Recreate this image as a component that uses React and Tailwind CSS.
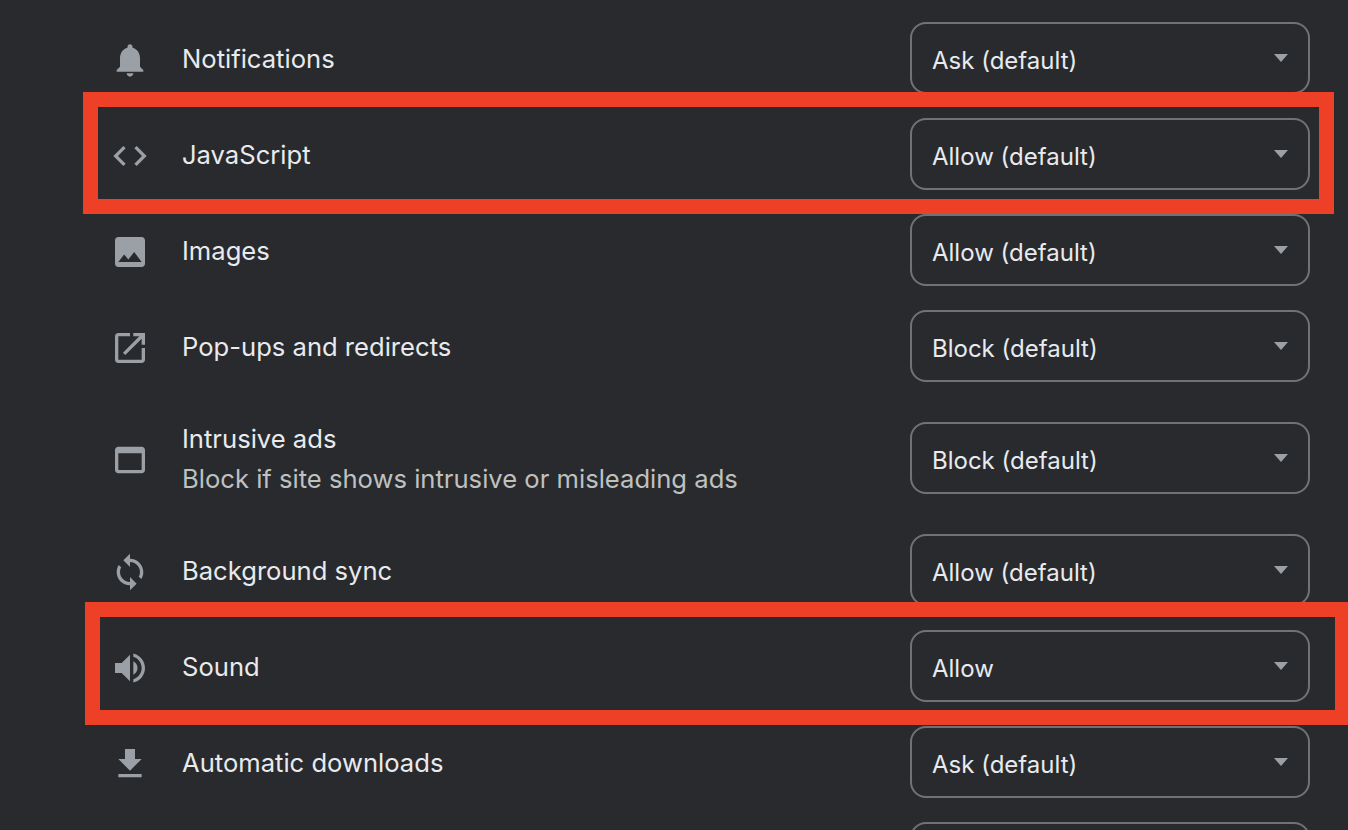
const ICONS = {
  bell: 'M12 22c1.1 0 2-.9 2-2h-4c0 1.1.89 2 2 2zm6-6v-5c0-3.07-1.64-5.64-4.5-6.32V4c0-.83-.67-1.5-1.5-1.5s-1.5.67-1.5 1.5v.68C7.63 5.36 6 7.92 6 11v5l-2 2v1h16v-1l-2-2z',
  code: 'M9.4 16.6L4.8 12l4.6-4.6L8 6l-6 6 6 6 1.4-1.4zm5.2 0l4.6-4.6-4.6-4.6L16 6l6 6-6 6-1.4-1.4z',
  image: 'M21 19V5c0-1.1-.9-2-2-2H5c-1.1 0-2 .9-2 2v14c0 1.1.9 2 2 2h14c1.1 0 2-.9 2-2zM8.5 13.5l2.5 3.01L14.5 12l4.5 6H5l3.5-4.5z',
  popup: 'M19 19H5V5h7V3H5c-1.11 0-2 .9-2 2v14c0 1.1.89 2 2 2h14c1.1 0 2-.9 2-2v-7h-2v7zM14 3v2h3.59l-9.83 9.83 1.41 1.41L19 6.41V10h2V3h-7z',
  ads: 'M19 4H5c-1.11 0-2 .9-2 2v12c0 1.1.89 2 2 2h14c1.1 0 2-.9 2-2V6c0-1.1-.89-2-2-2zm0 14H5V8h14v10z',
  sync: 'M12 4V1L8 5l4 4V6c3.31 0 6 2.69 6 6 0 1.01-.25 1.97-.7 2.8l1.46 1.46C19.54 15.03 20 13.57 20 12c0-4.42-3.58-8-8-8zm0 14c-3.31 0-6-2.69-6-6 0-1.01.25-1.97.7-2.8L5.24 7.74C4.46 8.97 4 10.43 4 12c0 4.42 3.58 8 8 8v3l4-4-4-4v3z',
  sound: 'M3 9v6h4l5 5V4L7 9H3zm13.5 3c0-1.77-1.02-3.29-2.5-4.03v8.05c1.48-.73 2.5-2.25 2.5-4.02zM14 3.23v2.06c2.89.86 5 3.54 5 6.71s-2.11 5.85-5 6.71v2.06c4.01-.91 7-4.49 7-8.77s-2.99-7.86-7-8.77z',
  download: 'M19 9h-4V3H9v6H5l7 7 7-7zM5 18v2h14v-2H5z',
};

const ROWS = [
  { icon: 'bell', label: 'Notifications', value: 'Ask (default)' },
  { icon: 'code', label: 'JavaScript', value: 'Allow (default)' },
  { icon: 'image', label: 'Images', value: 'Allow (default)' },
  { icon: 'popup', label: 'Pop-ups and redirects', value: 'Block (default)' },
  { icon: 'ads', label: 'Intrusive ads', sub: 'Block if site shows intrusive or misleading ads', value: 'Block (default)' },
  { icon: 'sync', label: 'Background sync', value: 'Allow (default)' },
  { icon: 'sound', label: 'Sound', value: 'Allow' },
  { icon: 'download', label: 'Automatic downloads', value: 'Ask (default)' },
  {},
];

const Row = ({ icon, label, sub, value }) => (
  <div className={`flex items-center pl-[110px] pr-[38px] ${sub ? 'h-[128px]' : 'h-[96px]'}`}>
    <div className="w-[72px] shrink-0 mt-[3px]">
      {icon && (
        <svg viewBox="0 0 24 24" className="w-10 h-10 fill-[#9aa0a6]">
          <path d={ICONS[icon]} />
        </svg>
      )}
    </div>
    <div className="flex-1 mt-[2px]">
      <div className="text-[25.6px] leading-[40px] text-[#e8eaed]">{label}</div>
      {sub && <div className="text-[25.6px] leading-[40px] text-[#bfc1c1]">{sub}</div>}
    </div>
    <div className="w-[400px] h-[72px] shrink-0 flex items-center justify-between pl-[20px] pr-[20px] border-2 border-[#717274] rounded-[16px]">
      <span className="text-[24px] text-[#e8eaed] mt-[5px]">{value}</span>
      <svg viewBox="0 0 14 8" className="w-[14px] h-2 fill-[#9aa0a6] -mt-[1px]">
        <polygon points="0,0 14,0 7,8" />
      </svg>
    </div>
  </div>
);

export default function App() {
  return (
    <div className="relative h-[830px] overflow-hidden bg-[#292a2d] pt-[10px] font-['Inter',sans-serif]">
      {ROWS.map((row, i) => (
        <Row key={i} {...row} />
      ))}
      {/* red annotation boxes */}
      <div className="absolute left-[83px] top-[92px] w-[1251px] h-[122px] border-[15px] border-[#ee4026]" />
      <div className="absolute left-[85px] top-[602px] w-[1265px] h-[123px] border-[15px] border-[#ee4026]" />
    </div>
  );
}
